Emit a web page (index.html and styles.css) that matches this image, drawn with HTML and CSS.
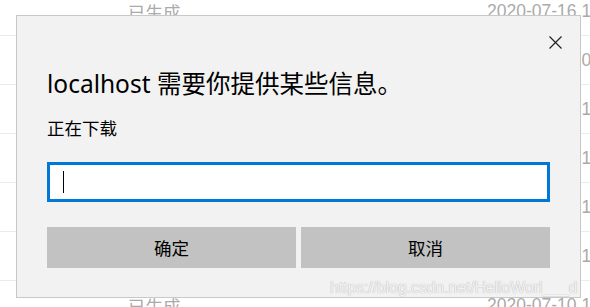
FILE: index.html
```html
<!DOCTYPE html>
<html lang="zh-CN">
<head>
  <meta charset="UTF-8" />
  <meta name="viewport" content="width=device-width, initial-scale=1.0"/>
  <title>localhost prompt</title>
  <link rel="stylesheet" href="styles.css">
</head>
<body>

  <!-- page behind the prompt -->
  <div class="list">
    <div class="row"><span class="status">已生成</span><span class="date">2020-07-16 11:42:08</span></div>
    <div class="row"><span class="status">已生成</span><span class="date">2020-07-16 09:15:33</span></div>
    <div class="row"><span class="status">已生成</span><span class="date">2020-07-15 17:02:51</span></div>
    <div class="row"><span class="status">已生成</span><span class="date">2020-07-14 15:26:40</span></div>
    <div class="row"><span class="status">已生成</span><span class="date">2020-07-13 14:08:12</span></div>
    <div class="row"><span class="status">已生成</span><span class="date">2020-07-10 10:31:05</span></div>
    <div class="row"><span class="status">已生成</span><span class="date">2020-07-10 10:12:47</span></div>
  </div>

  <div class="prompt">
    <div class="prompt-top">
      <button class="close-btn" title="关闭">
        <svg width="13" height="13" viewBox="0 0 13 13">
          <path d="M0.5 0.5 L12.5 12.5 M12.5 0.5 L0.5 12.5" stroke="#222" stroke-width="1.2" fill="none"/>
        </svg>
      </button>
    </div>
    <h1 class="prompt-title">localhost 需要你提供某些信息。</h1>
    <p class="prompt-msg">正在下载</p>
    <div class="prompt-input"><span class="caret"></span></div>
    <div class="prompt-buttons">
      <button class="pbtn">确定</button>
      <button class="pbtn">取消</button>
    </div>
  </div>

  <div class="watermark">https://blog.csdn.net/HelloWorl___d</div>

</body>
</html>
```

FILE: styles.css
```css
html, body {
  margin: 0;
  padding: 0;
  height: 100%;
  overflow: hidden;
  background: #fff;
}

body {
  font-family: "Liberation Sans", "Noto Sans CJK SC", sans-serif;
}

/* background table */
.list {
  margin-top: -13px;
}
.row {
  display: flex;
  align-items: center;
  height: 48px;
  border-bottom: 1px solid #ebebeb;
  font-size: 17.5px;
  color: #aaaaaa;
  white-space: nowrap;
}
.status {
  flex-shrink: 0;
  margin-left: 128px;
  width: 359px;
}
.date {
  flex-shrink: 0;
}

/* prompt dialog */
.prompt {
  position: absolute;
  left: 16px;
  top: 15px;
  width: 565px;
  height: 283px;
  box-sizing: border-box;
  background: #f2f2f2;
  border: 1px solid #c8c8c8;
  padding: 0 30px;
  font-family: "Noto Sans", "Noto Sans CJK SC", sans-serif;
  color: #000;
}
.prompt-top {
  display: flex;
  justify-content: flex-end;
  height: 41px;
  margin-right: -20px;
}
.close-btn {
  margin-top: 11px;
  width: 30px;
  height: 30px;
  padding: 0;
  border: none;
  background: transparent;
  display: flex;
  align-items: center;
  justify-content: center;
}
.prompt-title {
  margin: 10px 0 0 0;
  font-size: 24.5px;
  font-weight: normal;
  line-height: 34px;
  white-space: nowrap;
}
.prompt-msg {
  margin: 15px 0 0 0;
  font-size: 17.5px;
  line-height: 24px;
}
.prompt-input {
  margin-top: 22px;
  height: 40px;
  box-sizing: border-box;
  border: 3px solid #0078d7;
  background: #fff;
  display: flex;
  align-items: center;
}
.caret {
  margin-left: 13px;
  width: 1px;
  height: 22px;
  background: #000;
}
.prompt-buttons {
  margin-top: 25px;
  display: flex;
  gap: 5px;
}
.pbtn {
  flex: 1;
  height: 41px;
  border: none;
  background: #c2c2c2;
  font-family: "Noto Sans CJK SC", sans-serif;
  font-size: 17.5px;
  color: #000;
  padding: 0;
}

.watermark {
  position: absolute;
  left: 330px;
  top: 279px;
  font-family: "Liberation Sans", sans-serif;
  font-size: 15.7px;
  color: rgba(255, 255, 255, 0.9);
  text-shadow: 0 0 1px rgba(0, 0, 0, 0.4);
  white-space: nowrap;
}
```
